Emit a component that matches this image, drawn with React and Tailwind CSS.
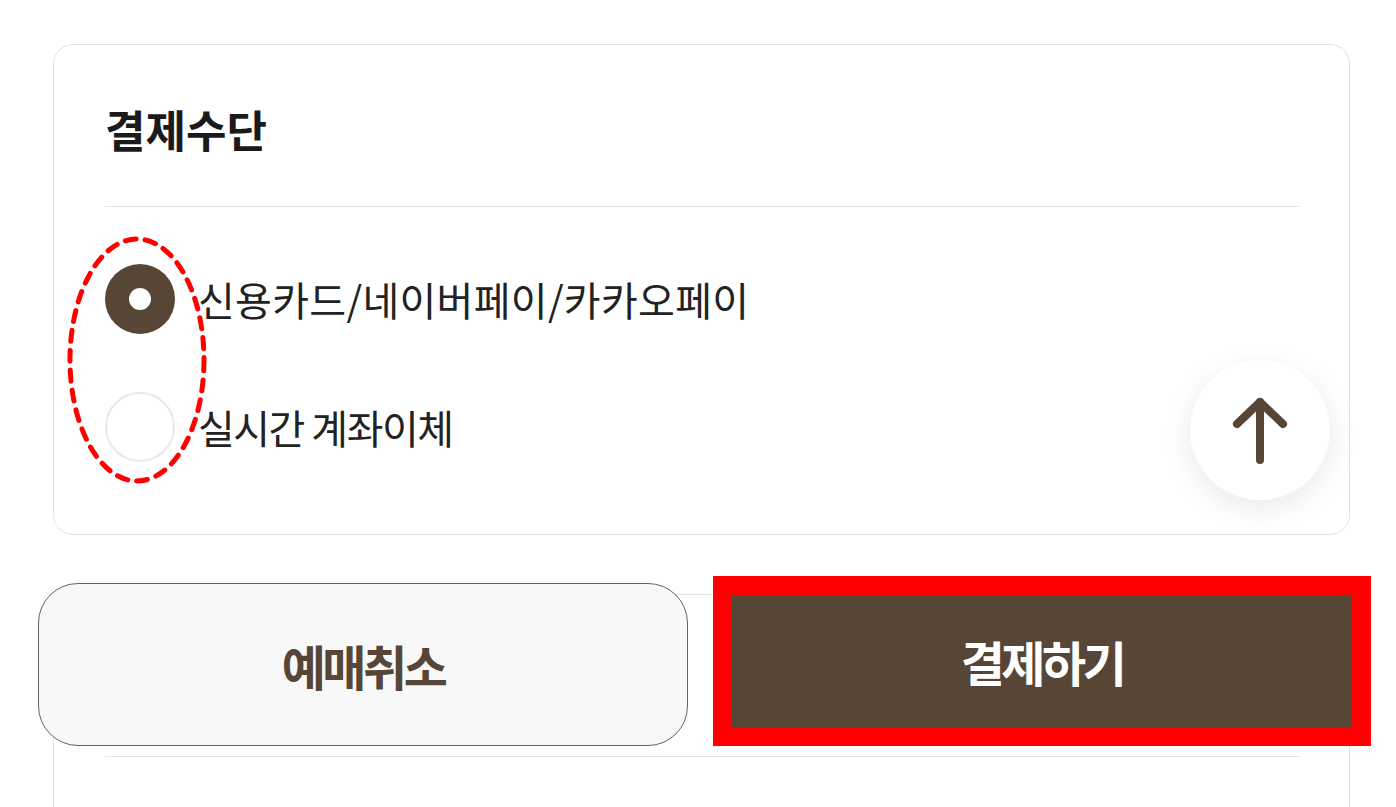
import React from "react";

function Radio({ checked }) {
  if (checked) {
    return (
      <span className="flex h-[70px] w-[70px] shrink-0 items-center justify-center rounded-full bg-[#574536]">
        <span className="h-[22px] w-[22px] rounded-full bg-white" />
      </span>
    );
  }
  return <span className="h-[70px] w-[70px] shrink-0 rounded-full border-2 border-[#e8e8e8] bg-white" />;
}

function PayOption({ label, checked, tight }) {
  return (
    <label className="flex h-[70px] items-center gap-[23px]">
      <Radio checked={checked} />
      <span className={tight ? "text-[40px] leading-none tracking-[-1.5px] text-[#222]" : "text-[40px] leading-none tracking-[0.3px] text-[#222]"}>
        {label}
      </span>
    </label>
  );
}

export default function App() {
  return (
    <div className="relative h-[807px] w-full overflow-hidden bg-white font-['Noto_Sans_CJK_KR','Noto_Sans',sans-serif]">
      <div className="pl-[53px] pr-[46px] pt-[44px]">
        {/* 결제수단 */}
        <section className="rounded-[20px] border border-[#e2e2e2] bg-white pl-[51px] pr-[49px]">
          <div className="flex h-[162px] items-center border-b border-[#e4e4e4] pt-[6px]">
            <h2 className="text-[44px] font-bold leading-none tracking-[0px] text-[#1a1a1a]">결제수단</h2>
          </div>
          <div className="flex flex-col gap-[58px] pb-[72px] pt-[57px]">
            <PayOption label="신용카드/네이버페이/카카오페이" checked />
            <PayOption label="실시간 계좌이체" tight />
          </div>
        </section>

        {/* next section, under the fixed footer */}
        <section className="mt-[59px] h-[300px] rounded-t-[20px] border border-[#e2e2e2] bg-white pl-[51px] pr-[49px]">
          <div className="h-[162px] border-b border-[#e4e4e4]" />
        </section>
      </div>

      {/* scroll to top */}
      <button
        type="button"
        aria-label="맨 위로"
        className="absolute left-[1190px] top-[360px] flex h-[140px] w-[140px] items-center justify-center rounded-full bg-white shadow-[0_8px_30px_rgba(0,0,0,0.09)]"
      >
        <svg width="60" height="72" viewBox="0 0 60 72" fill="none" stroke="#574536" strokeWidth="8" strokeLinecap="round" strokeLinejoin="round">
          <path d="M30 66V8" />
          <path d="M7 30L30 8l23 22" />
        </svg>
      </button>

      {/* footer buttons */}
      <div className="absolute left-[38px] top-[576px] flex items-end gap-[25px]">
        <button
          type="button"
          className="flex h-[163px] w-[650px] items-center justify-center rounded-[40px] border border-[#6e6058] bg-[#f8f8f8] text-[48px] font-bold tracking-[-3.5px] text-[#574536]"
        >
          예매취소
        </button>
        <div className="border-[19px] border-[#ff0000]">
          <button
            type="button"
            className="flex h-[132px] w-[620px] items-center justify-center bg-[#574536] text-[48px] font-bold tracking-[-3.5px] text-white"
          >
            결제하기
          </button>
        </div>
      </div>

      {/* annotation */}
      <svg className="pointer-events-none absolute left-[60px] top-[230px]" width="160" height="265" viewBox="0 0 160 265" fill="none">
        <ellipse cx="77" cy="130" rx="67" ry="121" stroke="#ff0000" strokeWidth="5" strokeDasharray="11 9" strokeLinecap="round" />
      </svg>
    </div>
  );
}
